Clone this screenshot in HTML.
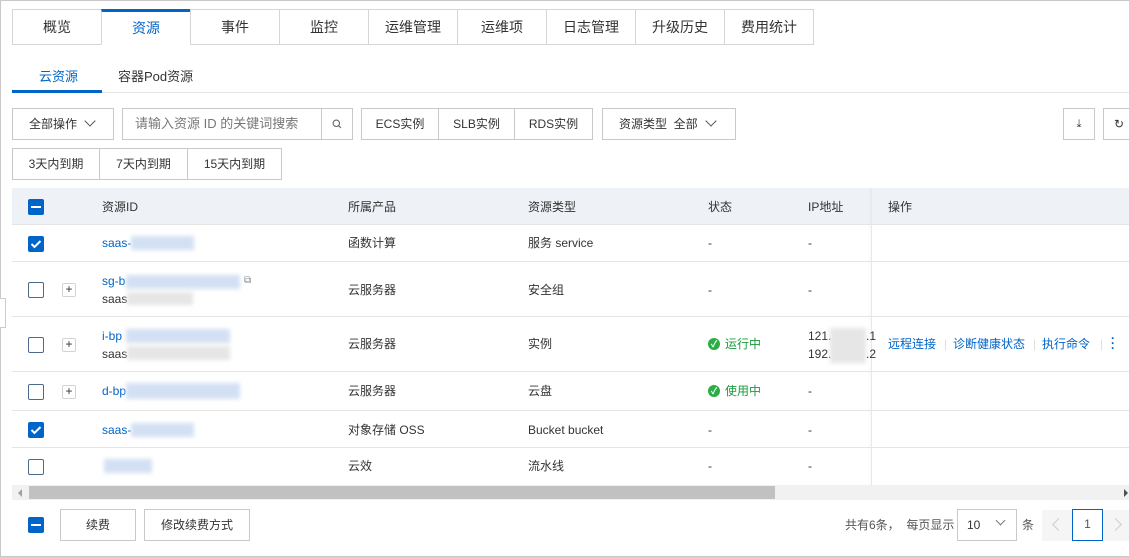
<!DOCTYPE html>
<html><head><meta charset="utf-8"><style>
*{box-sizing:border-box;margin:0;padding:0}
body{width:1129px;height:557px;overflow:hidden;background:#fff;font-family:"Liberation Sans","Noto Sans CJK SC",sans-serif;font-size:12px;color:#333;position:relative}
.a{position:absolute;line-height:16px}
.frame{left:0;top:0;width:1129px;height:557px;border:1px solid #c8c8c8;border-right:none}
.tab{top:9px;height:36px;width:90px;border:1px solid #d6d6d6;background:#fff;text-align:center;line-height:34px;font-size:14px;color:#333}
.btn{border:1px solid #c9c9c9;background:#fff;height:32px;line-height:30px;text-align:center;color:#333}
.line{height:1px;background:#e5e5e5}
.cb{width:16px;height:16px;border:1.5px solid #4e6a8a;border-radius:2px;background:#fff}
.cbon{width:16px;height:16px;background:#0064c8;border-radius:2px}
.plus{width:14px;height:14px;border:1px solid #d3d3d3;border-radius:2px;font-size:12px;line-height:11px;text-align:center;color:#333}
.blue{color:#0064c8}
.blur{background:#d3e0f3;filter:blur(2px)}
.grey{background:#e6e6e6;filter:blur(2px)}
.green{color:#1a9a3c}
.ok{width:12px;height:12px;border-radius:50%;background:#2bad45;color:#fff;font-size:9px;line-height:12px;text-align:center;font-weight:bold}
</style></head><body>
<div class="a frame"></div>
<div class="a" style="left:12px;top:44px;width:801px;height:1px;background:#d6d6d6"></div>
<div class="a tab" style="left:12px">概览</div>
<div class="a tab" style="left:101px;top:9px;border-top:3px solid #0064c8;border-bottom-color:#fff;color:#0064c8;line-height:32px">资源</div>
<div class="a tab" style="left:190px">事件</div>
<div class="a tab" style="left:279px">监控</div>
<div class="a tab" style="left:368px">运维管理</div>
<div class="a tab" style="left:457px">运维项</div>
<div class="a tab" style="left:546px">日志管理</div>
<div class="a tab" style="left:635px">升级历史</div>
<div class="a tab" style="left:724px">费用统计</div>

<div class="a line" style="left:12px;top:92px;width:1117px"></div>
<div class="a" style="left:12px;top:90px;width:90px;height:3px;background:#0064c8"></div>
<div class="a blue" style="left:39px;top:69px;font-size:13px">云资源</div>
<div class="a" style="left:118px;top:69px;font-size:13px">容器Pod资源</div>

<div class="a btn" style="left:12px;top:108px;width:102px;height:32px;text-align:left;padding-left:16px;line-height:30px">全部操作 <span style="display:inline-block;width:8px;height:8px;border-right:1.3px solid #555;border-bottom:1.3px solid #555;transform:rotate(45deg);margin-left:6px;position:relative;top:-3px"></span></div>
<div class="a btn" style="left:122px;top:108px;width:231px;text-align:left;padding-left:12px;color:#777;font-size:13px;line-height:30px">请输入资源 ID 的关键词搜索</div>
<div class="a" style="left:321px;top:108px;width:1px;height:32px;background:#c9c9c9"></div>
<svg class="a" style="left:332px;top:119px" width="10" height="10"><circle cx="4.3" cy="4.3" r="3.2" fill="none" stroke="#666" stroke-width="1.1"/><path d="M6.7 6.7L9 9" stroke="#666" stroke-width="1.1"/></svg>
<div class="a btn" style="left:361px;top:108px;width:78px;line-height:30px">ECS实例</div>
<div class="a btn" style="left:438px;top:108px;width:77px;line-height:30px">SLB实例</div>
<div class="a btn" style="left:514px;top:108px;width:79px;line-height:30px">RDS实例</div>
<div class="a btn" style="left:602px;top:108px;width:134px;text-align:left;padding-left:16px;line-height:30px">资源类型&nbsp;&nbsp;全部 <span style="display:inline-block;width:8px;height:8px;border-right:1.3px solid #555;border-bottom:1.3px solid #555;transform:rotate(45deg);margin-left:6px;position:relative;top:-3px"></span></div>
<div class="a btn" style="left:1063px;top:108px;width:32px;font-size:11px;line-height:30px">⤓</div>
<div class="a btn" style="left:1103px;top:108px;width:32px;text-align:left;padding-left:10px;line-height:30px">↻</div>

<div class="a btn" style="left:12px;top:148px;width:88px;line-height:30px">3天内到期</div>
<div class="a btn" style="left:99px;top:148px;width:89px;line-height:30px">7天内到期</div>
<div class="a btn" style="left:187px;top:148px;width:95px;line-height:30px">15天内到期</div>

<div class="a" style="left:12px;top:188px;width:1117px;height:36px;background:#eef1f6"></div>
<div class="a cbon" style="left:28px;top:199px"><div style="position:absolute;left:3px;top:7px;width:10px;height:2px;background:#fff"></div></div>
<div class="a" style="left:102px;top:199px">资源ID</div>
<div class="a" style="left:348px;top:199px">所属产品</div>
<div class="a" style="left:528px;top:199px">资源类型</div>
<div class="a" style="left:708px;top:199px">状态</div>
<div class="a" style="left:808px;top:199px">IP地址</div>
<div class="a" style="left:888px;top:199px">操作</div>

<div class="a line" style="left:12px;top:224px;width:1117px"></div>
<div class="a line" style="left:12px;top:261px;width:1117px"></div>
<div class="a line" style="left:12px;top:316px;width:1117px"></div>
<div class="a line" style="left:12px;top:371px;width:1117px"></div>
<div class="a line" style="left:12px;top:410px;width:1117px"></div>
<div class="a line" style="left:12px;top:447px;width:1117px"></div>
<div class="a" style="left:871px;top:188px;width:1px;height:297px;background:#e8e8e8;box-shadow:-1px 0 2px rgba(0,0,0,.05)"></div>

<!-- row1 -->
<div class="a cbon" style="left:28px;top:236px"><svg width="16" height="16" style="position:absolute;left:0;top:0"><path d="M3.5 8l3 3 6-6" stroke="#fff" stroke-width="2" fill="none"/></svg></div>
<div class="a blue" style="left:102px;top:235px">saas-</div>
<div class="a blur" style="left:131px;top:236px;width:63px;height:14px"></div>
<div class="a" style="left:348px;top:235px">函数计算</div>
<div class="a" style="left:528px;top:235px">服务 service</div>
<div class="a" style="left:708px;top:235px">-</div>
<div class="a" style="left:808px;top:235px">-</div>

<!-- row2 -->
<div class="a cb" style="left:28px;top:282px"></div>
<div class="a plus" style="left:62px;top:283px;line-height:11px">+</div>
<div class="a blue" style="left:102px;top:273px">sg-b</div>
<div class="a blur" style="left:126px;top:275px;width:114px;height:14px"></div>
<div class="a" style="left:244px;top:273px;font-size:10px;color:#888">⧉</div>
<div class="a" style="left:102px;top:291px">saas</div>
<div class="a grey" style="left:127px;top:292px;width:66px;height:13px"></div>
<div class="a" style="left:348px;top:282px">云服务器</div>
<div class="a" style="left:528px;top:282px">安全组</div>
<div class="a" style="left:708px;top:282px">-</div>
<div class="a" style="left:808px;top:282px">-</div>

<!-- row3 -->
<div class="a cb" style="left:28px;top:337px"></div>
<div class="a plus" style="left:62px;top:338px;line-height:11px">+</div>
<div class="a blue" style="left:102px;top:328px">i-bp</div>
<div class="a blur" style="left:126px;top:329px;width:104px;height:14px"></div>
<div class="a" style="left:102px;top:346px">saas</div>
<div class="a grey" style="left:127px;top:346px;width:103px;height:14px"></div>
<div class="a" style="left:348px;top:336px">云服务器</div>
<div class="a" style="left:528px;top:336px">实例</div>
<div class="a ok" style="left:708px;top:338px;line-height:12px">✓</div>
<div class="a green" style="left:725px;top:336px">运行中</div>
<div class="a" style="left:808px;top:328px">121.</div>
<div class="a" style="left:808px;top:346px">192.</div>
<div class="a grey" style="left:830px;top:328px;width:36px;height:35px"></div>
<div class="a" style="left:866px;top:328px">.1</div>
<div class="a" style="left:866px;top:346px">.2</div>
<div class="a blue" style="left:888px;top:336px">远程连接</div>
<div class="a" style="left:944px;top:336px;color:#ddd">|</div>
<div class="a blue" style="left:953px;top:336px">诊断健康状态</div>
<div class="a" style="left:1033px;top:336px;color:#ddd">|</div>
<div class="a blue" style="left:1042px;top:336px">执行命令</div>
<div class="a" style="left:1100px;top:336px;color:#ddd">|</div>
<div class="a blue" style="left:1111px;top:336px;font-weight:bold;line-height:5px;font-size:12px">·<br>·<br>·</div>

<!-- row4 -->
<div class="a cb" style="left:28px;top:384px"></div>
<div class="a plus" style="left:62px;top:385px;line-height:11px">+</div>
<div class="a blue" style="left:102px;top:383px">d-bp</div>
<div class="a blur" style="left:126px;top:383px;width:114px;height:16px"></div>
<div class="a" style="left:348px;top:383px">云服务器</div>
<div class="a" style="left:528px;top:383px">云盘</div>
<div class="a ok" style="left:708px;top:385px;line-height:12px">✓</div>
<div class="a green" style="left:725px;top:383px">使用中</div>
<div class="a" style="left:808px;top:383px">-</div>

<!-- row5 -->
<div class="a cbon" style="left:28px;top:422px"><svg width="16" height="16" style="position:absolute;left:0;top:0"><path d="M3.5 8l3 3 6-6" stroke="#fff" stroke-width="2" fill="none"/></svg></div>
<div class="a blue" style="left:102px;top:422px">saas-</div>
<div class="a blur" style="left:131px;top:423px;width:63px;height:14px"></div>
<div class="a" style="left:348px;top:422px">对象存储 OSS</div>
<div class="a" style="left:528px;top:422px">Bucket bucket</div>
<div class="a" style="left:708px;top:422px">-</div>
<div class="a" style="left:808px;top:422px">-</div>

<!-- row6 -->
<div class="a cb" style="left:28px;top:459px"></div>
<div class="a blur" style="left:104px;top:459px;width:48px;height:14px"></div>
<div class="a" style="left:348px;top:458px">云效</div>
<div class="a" style="left:528px;top:458px">流水线</div>
<div class="a" style="left:708px;top:458px">-</div>
<div class="a" style="left:808px;top:458px">-</div>

<!-- scrollbar -->
<div class="a" style="left:12px;top:485px;width:1117px;height:15px;background:#f1f1f1"></div>
<div class="a" style="left:29px;top:486px;width:746px;height:13px;background:#c1c1c1"></div>
<div class="a" style="left:18px;top:489px;width:0;height:0;border-top:4px solid transparent;border-bottom:4px solid transparent;border-right:4px solid #a0a0a0"></div>
<div class="a" style="left:1124px;top:489px;width:0;height:0;border-top:4px solid transparent;border-bottom:4px solid transparent;border-left:4px solid #505050"></div>

<!-- left edge tab -->
<div class="a" style="left:0;top:298px;width:6px;height:30px;border:1px solid #ccc;border-left:none;background:#fff"></div>

<!-- footer -->
<div class="a cbon" style="left:28px;top:517px"><div style="position:absolute;left:3px;top:7px;width:10px;height:2px;background:#fff"></div></div>
<div class="a btn" style="left:60px;top:509px;width:76px;line-height:30px">续费</div>
<div class="a btn" style="left:144px;top:509px;width:106px;line-height:30px">修改续费方式</div>
<div class="a" style="left:845px;top:517px;color:#555">共有6条，&nbsp;&nbsp;每页显示</div>
<div class="a btn" style="left:957px;top:509px;width:60px;text-align:left;padding-left:9px;line-height:30px">10</div>
<div class="a" style="left:997px;top:517px;width:7px;height:7px;border-right:1.3px solid #777;border-bottom:1.3px solid #777;transform:rotate(45deg)"></div>
<div class="a" style="left:1022px;top:517px;color:#555">条</div>
<div class="a" style="left:1042px;top:510px;width:87px;height:31px;background:#f5f5f5"></div>
<div class="a" style="left:1054px;top:520px;width:9px;height:9px;border-left:1.5px solid #ccc;border-bottom:1.5px solid #ccc;transform:rotate(45deg)"></div>
<div class="a" style="left:1072px;top:509px;width:31px;height:32px;border:1.5px solid #0064c8;background:#fff;text-align:center;line-height:29px;color:#555">1</div>
<div class="a" style="left:1111px;top:520px;width:9px;height:9px;border-right:1.5px solid #ccc;border-top:1.5px solid #ccc;transform:rotate(45deg)"></div>
</body></html>
